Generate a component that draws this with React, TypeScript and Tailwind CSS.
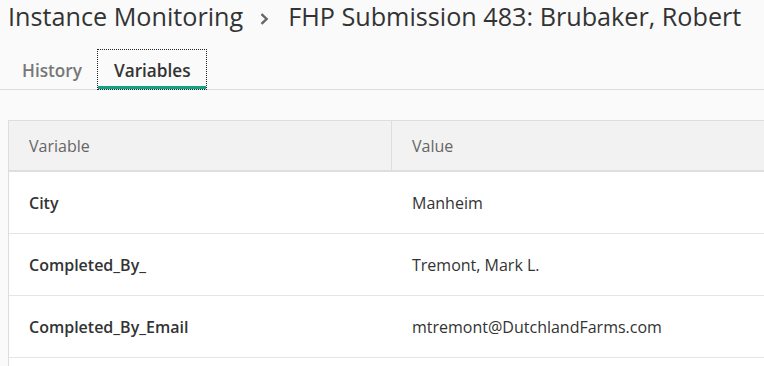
import React from "react";

const rows = [
  { k: "City", v: "Manheim" },
  { k: "Completed_By_", v: "Tremont, Mark L." },
  { k: "Completed_By_Email", v: "mtremont@DutchlandFarms.com" },
  { k: "", v: "" },
];

export default function App() {
  return (
    <div
      className="w-[764px] h-[366px] overflow-hidden bg-[#fafafa] text-[#333]"
      style={{ fontFamily: '"Open Sans", sans-serif' }}
    >
      <div className="flex items-center h-[34px] pl-[8px] text-[25.2px] leading-none text-[#333] whitespace-nowrap">
        <span>Instance Monitoring</span>
        <svg className="ml-[17px] mr-[19px] mt-[3px]" width="9" height="12" viewBox="0 0 9 12">
          <path d="M1.5 1.2 L6.6 6 L1.5 10.8" fill="none" stroke="#666" strokeWidth="2.4" />
        </svg>
        <span>FHP Submission 483: Brubaker, Robert</span>
      </div>
      <div className="mt-[15px] flex border-b border-[#dddddd] h-[41px] pl-[8px]">
        <div className="pl-[14px] pr-[15px] pt-[3px] flex items-center text-[17.2px] font-semibold text-[#777]">History</div>
        <div className="relative pl-[16px] pr-[15px] pt-[3px] flex items-center text-[17.2px] font-semibold text-[#333] border border-dotted border-[#222] -mb-px">
          Variables
          <div className="absolute left-0 right-0 bottom-0 h-[3px] bg-[#12a385]" />
        </div>
      </div>
      <div className="mt-[30px] ml-[8px] border-l border-t border-[#dddddd] bg-white">
        <div className="flex h-[51px] bg-[#f2f2f2] border-b-2 border-[#dedede] text-[16px] text-[#666]">
          <div className="w-[383px] border-r border-[#dddddd] flex items-center pl-[20px]">Variable</div>
          <div className="flex-1 flex items-center pl-[20px]">Value</div>
        </div>
        {rows.map((r, i) => (
          <div key={i} className="flex h-[62px] border-b border-[#e5e5e5] text-[16px]">
            <div className="w-[383px] flex items-center pl-[20px] font-semibold text-[#333]">{r.k}</div>
            <div className="flex-1 flex items-center pl-[20px] text-[#333]">{r.v}</div>
          </div>
        ))}
      </div>
    </div>
  );
}
